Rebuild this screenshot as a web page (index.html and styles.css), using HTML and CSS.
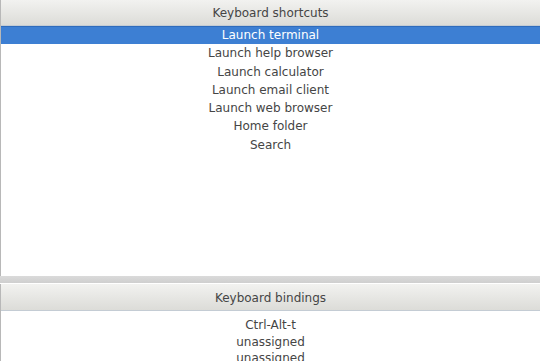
FILE: index.html
```html
<!DOCTYPE html>
<html lang="en">
<head>
    <meta charset="UTF-8">
    <title>Keyboard</title>
    <link rel="stylesheet" href="styles.css">
</head>
<body>
    <div class="panel top">
        <div class="head">Keyboard shortcuts</div>
        <ul class="list">
            <li class="sel">Launch terminal</li>
            <li>Launch help browser</li>
            <li>Launch calculator</li>
            <li>Launch email client</li>
            <li>Launch web browser</li>
            <li>Home folder</li>
            <li>Search</li>
        </ul>
    </div>
    <div class="sep"></div>
    <div class="panel bottom">
        <div class="head">Keyboard bindings</div>
        <ul class="list">
            <li>Ctrl-Alt-t</li>
            <li>unassigned</li>
            <li>unassigned</li>
        </ul>
    </div>
</body>
</html>
```

FILE: styles.css
```css
body{
    margin: 0;
    font-family: "DejaVu Sans", sans-serif;
    font-size: 12px;
    color: #454545;
    background: #fff;
    overflow: hidden;
}
.panel{
    border-left: 1px solid #b8b8b8;
    background: #fff;
}
.panel.top{
    height: 276px;
}
.panel.bottom{
    height: 77px;
}
.head{
    height: 25px;
    line-height: 26px;
    text-align: center;
    background: linear-gradient(#f2f2f0, #dcdcd8);
    border-bottom: 1px solid #c4ccd4;
}
.list{
    list-style: none;
    margin: 0;
    padding: 0;
}
.list li{
    height: 18.3px;
    line-height: 19px;
    text-align: center;
}
.list li.sel{
    background: #3d7fd3;
    color: #fff;
    border-top: 1px solid #2f6cbc;
    height: 17.3px;
    line-height: 17.5px;
}
.sep{
    height: 7px;
    background: linear-gradient(#dadada, #cfcfcf);
    border-bottom: 1px solid #fff;
}
.bottom .head{
    height: 26px;
    line-height: 28px;
}
.bottom .list{
    padding-top: 6px;
}
.bottom .list li{
    height: 16.5px;
    line-height: 16.5px;
}
```
